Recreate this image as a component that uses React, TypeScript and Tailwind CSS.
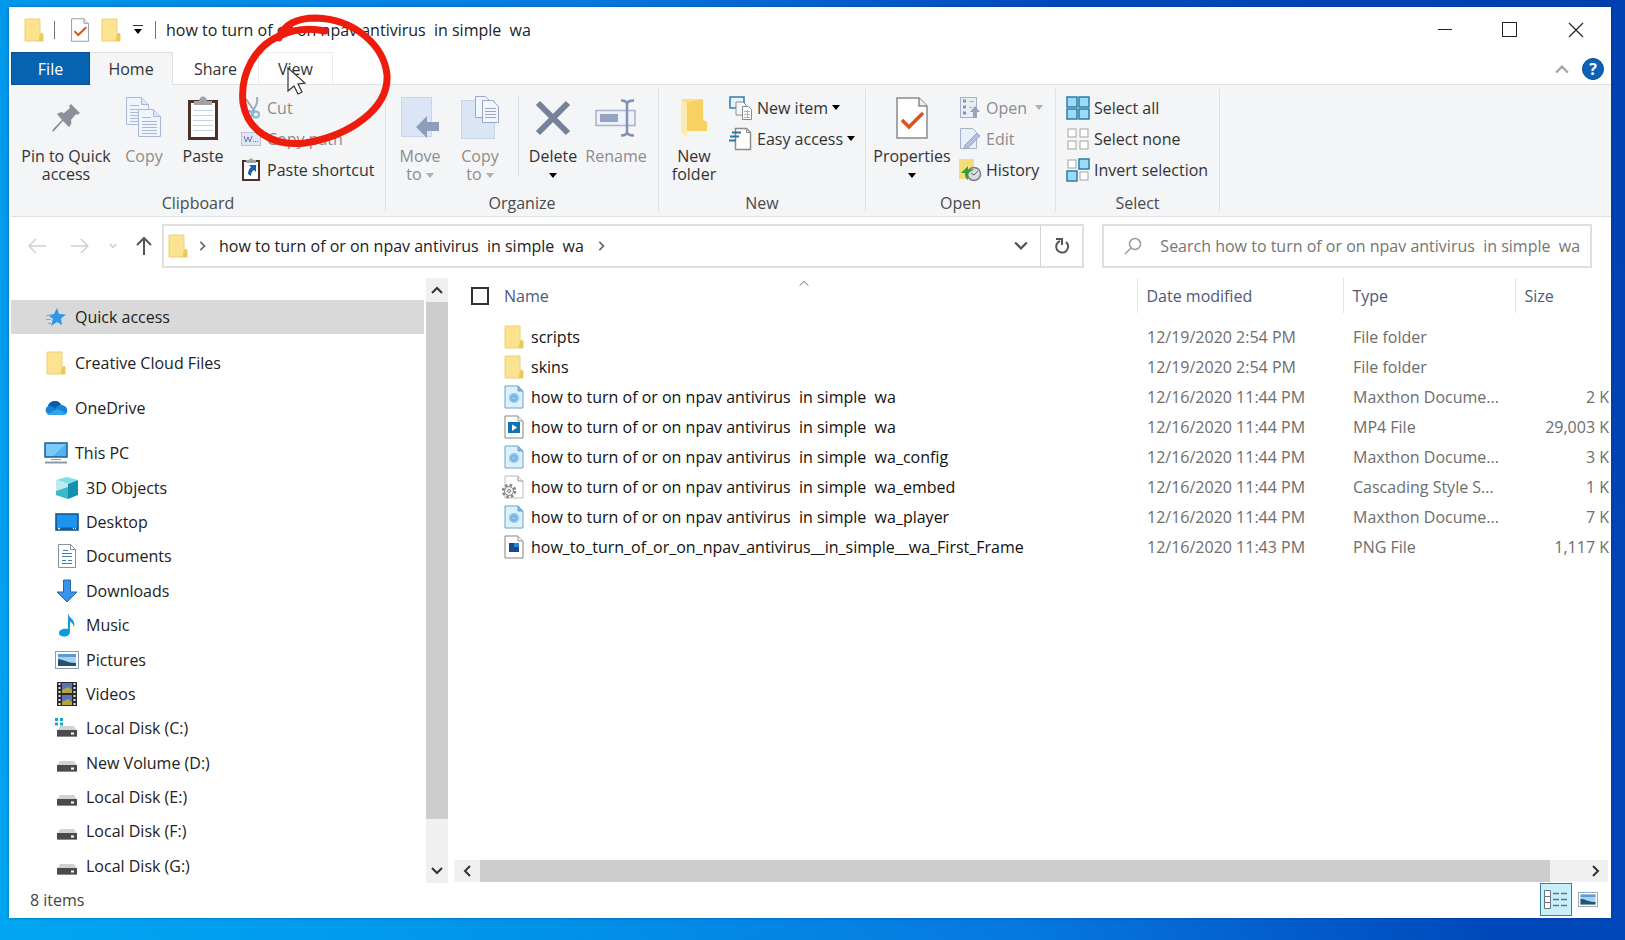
import React, { ReactNode } from "react";

type IconProps = { className?: string };

const FolderIcon = ({ className = "w-5 h-6" }: IconProps) => (
  <svg viewBox="0 0 20 24" className={className}>
    <path d="M1 1h15v14l3 1v7H1z" fill="#fbe38f" />
    <path d="M1 1h15v14l3 1v7H1z" fill="none" stroke="#ecd07a" />
    <path d="M14.5 23l1.500-7 3-1v8z" fill="#eec758" />
  </svg>
);

const CheckDocIcon = ({ className = "w-5 h-6" }: IconProps) => (
  <svg viewBox="0 0 32 42" className={className}>
    <path d="M1 1h22l8 8v32H1z" fill="#fff" stroke="#8a8a8a" strokeWidth="1.500" />
    <path d="M23 1v8h8" fill="#eee" stroke="#8a8a8a" strokeWidth="1.500" />
    <path d="M6 23l7 7 14-14" fill="none" stroke="#d9541e" strokeWidth="3.500" />
  </svg>
);

const PinIcon = () => (
  <svg viewBox="0 0 30 30" className="w-[30px] h-[30px]">
    <path d="M20 1l9 9-3 2-1-1-5 6c1 3 0 5-2 7l-6-6-9 10-2 1 1-3 9-9-5-6c3-2 5-2 7-1l6-5-1-2z" fill="#8b9199" />
  </svg>
);

const Page = ({ x, y }: { x: number; y: number }) => (
  <g transform={`translate(${x} ${y})`} stroke="#a9b8d4">
    <path d="M.5.5h15l7 7v20h-22z" fill="#f0f5fd" />
    <path d="M15.500.5v7h7" fill="#dbe5f5" />
    <path d="M4 8.500h9M4 12.500h15M4 15.500h15M4 18.500h15M4 21.500h15M4 24.500h15" />
  </g>
);

const CopyIcon = () => (
  <svg viewBox="0 0 36 42" className="w-9 h-[42px]">
    <Page x={0} y={0} />
    <Page x={12} y={12} />
  </svg>
);

const PasteIcon = () => (
  <svg viewBox="0 0 30 44" className="w-[30px] h-11">
    <rect x="1.500" y="5.500" width="27" height="37" fill="#fff" stroke="#4b3327" strokeWidth="3" />
    <path d="M5 14.500h20M5 19.500h20M5 24.500h20M5 29.500h20M5 34.500h20" stroke="#c3d3e2" />
    <path d="M6 9V5h5c0-6 8-6 8 0h5v4z" fill="#a0a4a8" />
  </svg>
);

const ScissorsIcon = () => (
  <svg viewBox="0 0 20 22" className="w-5 h-[22px]" fill="none">
    <path d="M16 0c1 6-1 9-5 15M5 2l9 13" stroke="#9aa9bd" strokeWidth="2" />
    <circle cx="8" cy="17" r="3" stroke="#8bb5d0" strokeWidth="2" />
    <circle cx="15" cy="17.500" r="3" stroke="#8bb5d0" strokeWidth="2" />
  </svg>
);

const CopyPathIcon = () => (
  <svg viewBox="0 0 20 14" className="w-5 h-[14px]">
    <rect x=".5" y=".5" width="19" height="13" fill="#dfe6f6" stroke="#b9c3dc" />
    <path d="M3 4l2 6 2-5 2 5 2-6" fill="none" stroke="#6b7da8" />
    <path d="M12 9.500h1M14 9.500h1M16 9.500h1" stroke="#6b7da8" />
  </svg>
);

const PasteShortcutIcon = () => (
  <svg viewBox="0 0 20 23" className="w-5 h-[23px]">
    <rect x="2" y="3" width="16" height="19" fill="#fff" stroke="#4b3327" strokeWidth="2" />
    <path d="M5 5V2h3c0-2 4-2 4 0h3v3z" fill="#a0a4a8" />
    <path d="M8 7h7v7l-2-2c-2 1-3 3-3 6l-3-2c0-3 1-5 3-7z" fill="#1c5fa8" />
  </svg>
);

const MoveToIcon = () => (
  <svg viewBox="0 0 38 42" className="w-[38px] h-[42px]">
    <rect x=".5" y=".5" width="30" height="39" fill="#dae5f6" stroke="#c8d5ea" />
    <path d="M15 30l11-11v6h12v9H26v7z" fill="#8d9dbb" />
  </svg>
);

const CopyToIcon = () => (
  <svg viewBox="0 0 38 44" className="w-[38px] h-11">
    <rect x=".5" y="4.500" width="33" height="38" fill="#dae5f6" stroke="#c8d5ea" />
    <g fill="#f3f6fd" stroke="#98a7c6">
      <path d="M14.500.5h10l5 5v16h-15z" />
      <path d="M21.500 4.500h10l6 6v16h-16z" />
      <path d="M24 12.500h11M24 15.500h11M24 18.500h11M24 21.500h11" />
    </g>
  </svg>
);

const DeleteIcon = () => (
  <svg viewBox="0 0 36 36" className="w-9 h-9">
    <path d="M3 3l30 30M33 3L3 33" stroke="#76819c" strokeWidth="6" />
  </svg>
);

const RenameIcon = () => (
  <svg viewBox="0 0 42 38" className="w-[42px] h-[38px]">
    <rect x="1" y="11.500" width="39" height="15" fill="#eef2fa" stroke="#a9b3c9" strokeWidth="1.500" />
    <rect x="5" y="15" width="18" height="8" fill="#97a4c0" />
    <path d="M26 1.500c4 0 6 1 6 4v27c0 3-2 4-6 4M39 1.500c-4 0-7 1-7 4v27c0 3 3 4 7 4" fill="none" stroke="#8492b0" strokeWidth="2.500" />
  </svg>
);

const NewFolderIcon = () => (
  <svg viewBox="0 0 26 38" className="w-[26px] h-[38px]">
    <path d="M0 0h22v22l4 1v9H6v6l-6-5z" fill="#fbdf83" />
    <path d="M6 4l16-4v21l4 2v9H6z" fill="#f7d163" />
    <path d="M0 0l6 5v33l-6-5z" fill="#fdeab0" />
  </svg>
);

const NewItemIcon = () => (
  <svg viewBox="0 0 24 24" className="w-6 h-6">
    <path d="M1 1h14v11H1z" fill="#e6f3fc" stroke="#3679a8" strokeWidth="1.500" />
    <path d="M7 6h7l3 3v10H7z" fill="#f5f8fb" stroke="#888" />
    <path d="M13.500 10.500h6l3 3v10h-9z" fill="#fff" stroke="#888" />
    <path d="M15 15.500h6M15 18.500h6M15 21.500h6M18.500 14v8" stroke="#b5b5b5" />
  </svg>
);

const EasyAccessIcon = () => (
  <svg viewBox="0 0 24 24" className="w-6 h-6">
    <path d="M6.500 1.500h11l4 4v17h-15z" fill="#fff" stroke="#8d8d8d" strokeWidth="1.500" />
    <path d="M17.500 1.500v4h4" fill="none" stroke="#8d8d8d" />
    <path d="M3 5.500h9M1 9.500h9M0 13.500h7" stroke="#35739f" strokeWidth="2" />
  </svg>
);

const OpenIcon = () => (
  <svg viewBox="0 0 20 22" className="w-5 h-[22px]">
    <rect x=".5" y=".5" width="16" height="20" fill="#e9edf6" stroke="#a6b0c6" />
    <path d="M3 4h3M3 10h3M3 16h3" stroke="#8694b2" strokeWidth="3" />
    <path d="M9 4.500h5M9 10.500h3" stroke="#a6b0c6" />
    <path d="M15 9l5 6h-3v6h-4v-6h-3z" fill="#98a4bc" />
  </svg>
);

const EditIcon = () => (
  <svg viewBox="0 0 20 22" className="w-5 h-[22px]">
    <path d="M.5.5h12l4 4v16H.5z" fill="#e9eef9" stroke="#a6b0c6" />
    <path d="M17 5l3 3L8 20l-4 1 1-4z" fill="#b3c0df" stroke="#98a7ca" />
  </svg>
);

const HistoryIcon = () => (
  <svg viewBox="0 0 24 24" className="w-6 h-6">
    <path d="M1 1h15v12l2 8H1z" fill="#f7dd78" />
    <circle cx="16" cy="16" r="6.500" fill="#d9dde0" stroke="#7b7f85" strokeWidth="1.500" />
    <path d="M16 17l4-4M16 17l-3-2" stroke="#666" />
    <path d="M3 15l7-7v4c3-1 5-1 6 0-5 1-7 4-6 10-2-1-3-3-3-7z" fill="#2e9f3a" />
  </svg>
);

const SelectIcon = ({ on }: { on: boolean[] }) => (
  <svg viewBox="0 0 24 24" className="w-6 h-6">
    {on.map((active, i) => {
      const x = (i % 2) * 12;
      const y = Math.floor(i / 2) * 12;
      return active ? (
        <rect key={i} x={x + 1} y={y + 1} width="10" height="10" fill="#9bdcf8" stroke="#2b7ba8" strokeWidth="1.500" />
      ) : (
        <rect key={i} x={x + 2} y={y + 2} width="8" height="8" fill="#fff" stroke="#a3a3a3" />
      );
    })}
  </svg>
);

const Chevron = ({ dir, className = "w-3 h-3 text-[#333]", width = 2 }: { dir: "up" | "down" | "left" | "right"; className?: string; width?: number }) => {
  const paths = {
    up: "M1 9l5-5 5 5",
    down: "M1 3l5 5 5-5",
    left: "M9 1L4 6l5 5",
    right: "M4 1l5 5-5 5"
  };
  return (
    <svg viewBox="0 0 12 12" className={className} fill="none" stroke="currentColor" strokeWidth={width}>
      <path d={paths[dir]} />
    </svg>
  );
};

const Caret = ({ className = "text-black" }: IconProps) => (
  <svg viewBox="0 0 8 5" className={`inline-block w-2 h-[5px] shrink-0 ${className}`}>
    <path d="M0 0h8L4 5z" fill="currentColor" />
  </svg>
);

const StarIcon = () => (
  <svg viewBox="0 0 20 20" className="w-5 h-5">
    <path d="M11 1l2 6 7 .5-5 4 1 6.500-5-3-6 4 2-7-5-4 6-1z" fill="#2f97e6" />
    <path d="M0 8.500h6M0 12.500h5M2 16.500h3" stroke="#5eb2f0" />
  </svg>
);

const OneDriveIcon = () => (
  <svg viewBox="0 0 24 16" className="w-6 h-4">
    <path d="M5 15a5 5 0 0 1-1-9c2-6 11-7 13-1 4 0 7 3 6 7 0 2-2 3-4 3z" fill="#1583d8" />
    <path d="M4 6c2-6 11-7 13-1-3 0-5 2-6 4C9 6 7 5 4 6z" fill="#0c59a8" />
    <path d="M3 14l11-5 8 4c-1 2-2 2-3 2H5z" fill="#2ea4ee" />
  </svg>
);

const ComputerIcon = () => (
  <svg viewBox="0 0 24 22" className="w-6 h-[22px]">
    <rect x="1" y="1" width="22" height="14" fill="#4cb4f2" stroke="#1f5f8f" strokeWidth="1.500" />
    <path d="M2 2h20L9 14H2z" fill="#79cbf8" />
    <path d="M7 17.500h10" stroke="#8fa0ad" />
    <path d="M1 20.500h22" stroke="#8d9ba6" strokeWidth="2" />
  </svg>
);

const CubeIcon = () => (
  <svg viewBox="0 0 24 22" className="w-6 h-[22px]">
    <path d="M1 3l11-3 11 3-10 4z" fill="#7fe0ea" />
    <path d="M1 3l12 4v15L1 18z" fill="#bfe9ef" />
    <path d="M1 14l12-4v12L1 18z" fill="#3ab9c6" />
    <path d="M23 3L13 7v15l10-4z" fill="#148fb1" />
  </svg>
);

const DesktopIcon = () => (
  <svg viewBox="0 0 24 18" className="w-6 h-[18px]">
    <rect x="1" y="1" width="22" height="16" fill="#1c94f0" stroke="#104f83" strokeWidth="1.500" />
    <path d="M2 15.500h20" stroke="#0b5ea5" strokeWidth="2" />
    <path d="M3 15.500h2M18 15.500h1M20 15.500h1" stroke="#fff" strokeWidth="1.500" />
  </svg>
);

const DocumentIcon = () => (
  <svg viewBox="0 0 18 24" className="w-[18px] h-6">
    <path d="M.5.5h12l5 5v18H.5z" fill="#fff" stroke="#8a8f94" />
    <path d="M12.500.5v5h5" fill="none" stroke="#8a8f94" />
    <path d="M5 6.500h5M4 9.500h10M4 12.500h10M4 16.500h4M4 19.500h10M10 16.500h4" stroke="#3a82ad" />
  </svg>
);

const DownloadIcon = () => (
  <svg viewBox="0 0 22 24" className="w-[22px] h-6">
    <path d="M7.500 1h7v12H21L11 23 1 13h6.500z" fill="#3a94ea" stroke="#2467ad" />
  </svg>
);

const MusicIcon = () => (
  <svg viewBox="0 0 18 24" className="w-[18px] h-6">
    <path d="M10 0c1 6 8 6 6 14-1-4-3-5-4-5v10c0 6-11 6-11 1 0-3 4-5 9-4z" fill="#109bdc" />
  </svg>
);

const PictureIcon = ({ className = "w-6 h-[18px]" }: IconProps) => (
  <svg viewBox="0 0 24 18" className={className}>
    <rect x=".5" y=".5" width="23" height="17" fill="#fff" stroke="#8c99aa" />
    <rect x="3" y="3" width="18" height="12" fill="#a5d3f3" />
    <path d="M3 3h18v3H3z" fill="#5f9bd0" />
    <path d="M3 8c5 0 9 4 18 4v3H3z" fill="#275371" />
  </svg>
);

const VideoIcon = () => (
  <svg viewBox="0 0 20 24" className="w-5 h-6">
    <path d="M0 0h20v24H0z" fill="#2b2b2e" />
    <path d="M5 1h10v10H5zM5 13h10v10H5z" fill="#5a74b8" />
    <path d="M5 8l6-3 4 3v3H5zM5 20l6-3 4 3v3H5z" fill="#b4a53f" />
    <path d="M2.500 1v23M17.500 1v23" stroke="#e5e5e5" strokeWidth="2" strokeDasharray="2 2" />
  </svg>
);

const DiskIcon = ({ system }: { system?: boolean }) => (
  <svg viewBox="0 0 24 22" className="w-6 h-[22px]">
    <path d="M5 9h14l3 5H2z" fill="#d2d2d2" />
    <rect x="2" y="13" width="20" height="7" fill="#4a4a4a" />
    <path d="M2 19.500h20" stroke="#8a8a8a" />
    <path d="M16 16.500h3" stroke="#fff" strokeWidth="2" />
    {system && <path d="M0 2.500h3M5 2.500h3M0 7h3M5 7h3" stroke="#19a5cf" strokeWidth="3" />}
  </svg>
);

const FileIcon = ({ kind }: { kind: string }) => {
  if (kind === "folder") return <FolderIcon />;
  const web = kind === "web";
  return (
    <svg viewBox="0 0 20 24" className="w-5 h-6 overflow-visible">
      <path d="M1 1h13l5 5v17H1z" fill={web ? "#dcf0fc" : "#fff"} stroke={web ? "#6ba3cc" : kind === "css" ? "#bbb" : "#838383"} />
      <path d="M14 1v5h5" fill={web ? "#7db4dc" : "#eee"} stroke={web ? "#6ba3cc" : "#999"} />
      {web && <circle cx="10" cy="13" r="5" fill="#8cc4ee" />}
      {web && <circle cx="10" cy="13" r="2.500" fill="none" stroke="#6aaade" />}
      {kind === "video" && <path d="M4 7h12v11H4z" fill="#1173b4" />}
      {kind === "video" && <path d="M8 9.500l5 3-5 3.500z" fill="#fff" />}
      {kind === "image" && <path d="M5 8h10v9H5z" fill="#174b8e" />}
      {kind === "image" && <path d="M10 8h5v4h-5z" fill="#2f87d0" />}
      {kind === "css" && (
        <g fill="none" stroke="#858585">
          <circle cx="5" cy="16" r="6" strokeWidth="2.500" strokeDasharray="2.500 2.200" />
          <circle cx="5" cy="16" r="4.500" fill="#eee" />
          <circle cx="5" cy="16" r="1.500" />
        </g>
      )}
    </svg>
  );
};

const folderName = "how to turn of or on npav antivirus  in simple  wa";

const places: { name: string; icon: ReactNode; child?: boolean }[] = [
  { name: "Quick access", icon: <StarIcon /> },
  { name: "Creative Cloud Files", icon: <FolderIcon /> },
  { name: "OneDrive", icon: <OneDriveIcon /> },
  { name: "This PC", icon: <ComputerIcon /> },
  { name: "3D Objects", icon: <CubeIcon />, child: true },
  { name: "Desktop", icon: <DesktopIcon />, child: true },
  { name: "Documents", icon: <DocumentIcon />, child: true },
  { name: "Downloads", icon: <DownloadIcon />, child: true },
  { name: "Music", icon: <MusicIcon />, child: true },
  { name: "Pictures", icon: <PictureIcon />, child: true },
  { name: "Videos", icon: <VideoIcon />, child: true },
  { name: "Local Disk (C:)", icon: <DiskIcon system />, child: true },
  { name: "New Volume (D:)", icon: <DiskIcon />, child: true },
  { name: "Local Disk (E:)", icon: <DiskIcon />, child: true },
  { name: "Local Disk (F:)", icon: <DiskIcon />, child: true },
  { name: "Local Disk (G:)", icon: <DiskIcon />, child: true }
];

const files = [
  { name: "scripts", date: "12/19/2020 2:54 PM", type: "File folder", size: "", kind: "folder" },
  { name: "skins", date: "12/19/2020 2:54 PM", type: "File folder", size: "", kind: "folder" },
  { name: folderName, date: "12/16/2020 11:44 PM", type: "Maxthon Docume...", size: "2 K", kind: "web" },
  { name: folderName, date: "12/16/2020 11:44 PM", type: "MP4 File", size: "29,003 K", kind: "video" },
  { name: `${folderName}_config`, date: "12/16/2020 11:44 PM", type: "Maxthon Docume...", size: "3 K", kind: "web" },
  { name: `${folderName}_embed`, date: "12/16/2020 11:44 PM", type: "Cascading Style S...", size: "1 K", kind: "css" },
  { name: `${folderName}_player`, date: "12/16/2020 11:44 PM", type: "Maxthon Docume...", size: "7 K", kind: "web" },
  { name: "how_to_turn_of_or_on_npav_antivirus__in_simple__wa_First_Frame", date: "12/16/2020 11:43 PM", type: "PNG File", size: "1,117 K", kind: "image" }
];

const BigButton = ({ icon, className, children }: { icon: ReactNode; className: string; children: ReactNode }) => (
  <button className={`flex flex-col items-center shrink-0 pt-[11px] leading-[18px] whitespace-normal ${className}`}>
    <span className="flex items-center justify-center h-11 mb-[7px]">{icon}</span>
    <span>{children}</span>
  </button>
);

const SmallButton = ({ icon, disabled, children }: { icon: ReactNode; disabled?: boolean; children: ReactNode }) => (
  <button className={`flex items-center gap-1 h-[31px] ${disabled ? "text-[#8c8c8c]" : ""}`}>
    <span className="flex items-center justify-center w-6">{icon}</span>
    {children}
  </button>
);

const Group = ({ title, className, children }: { title: string; className: string; children: ReactNode }) => (
  <section className={`flex flex-col shrink-0 my-1 border-r border-[#e0e1e3] ${className}`}>
    <div className="flex h-[105px] -mt-1 mb-1">{children}</div>
    <h2 className="text-center leading-[18px] text-[#4a4a4a]">{title}</h2>
  </section>
);

const Ribbon = () => (
  <div className="flex h-[133px] shrink-0 bg-[#f4f5f7] border-y border-[#dfe0e2] whitespace-nowrap">
    <Group title="Clipboard" className="w-[375px]">
      <BigButton icon={<PinIcon />} className="w-[110px] px-1">Pin to Quick access</BigButton>
      <BigButton icon={<CopyIcon />} className="w-[46px] text-[#8c8c8c]">Copy</BigButton>
      <BigButton icon={<PasteIcon />} className="w-[72px]">Paste</BigButton>
      <div className="pt-[7px]">
        <SmallButton icon={<ScissorsIcon />} disabled>Cut</SmallButton>
        <SmallButton icon={<CopyPathIcon />} disabled>Copy path</SmallButton>
        <SmallButton icon={<PasteShortcutIcon />}>Paste shortcut</SmallButton>
      </div>
    </Group>
    <Group title="Organize" className="w-[273px]">
      <BigButton icon={<MoveToIcon />} className="w-14 ml-[6px] text-[#8c8c8c]">
        Move to&nbsp;<Caret className="text-[#b0b0b0]" />
      </BigButton>
      <BigButton icon={<CopyToIcon />} className="w-14 ml-1 text-[#8c8c8c]">
        Copy to&nbsp;<Caret className="text-[#b0b0b0]" />
      </BigButton>
      <div className="w-px h-20 mt-3 ml-[10px] mr-1 bg-[#dcdde0]" />
      <BigButton icon={<DeleteIcon />} className="w-[60px]">
        Delete <Caret />
      </BigButton>
      <BigButton icon={<RenameIcon />} className="w-[66px] text-[#8c8c8c]">Rename</BigButton>
    </Group>
    <Group title="New" className="w-[207px]">
      <BigButton icon={<NewFolderIcon />} className="w-[66px] ml-[2px]">New folder</BigButton>
      <div className="pt-[7px] ml-[2px]">
        <SmallButton icon={<NewItemIcon />}>New item <Caret /></SmallButton>
        <SmallButton icon={<EasyAccessIcon />}>Easy access <Caret /></SmallButton>
      </div>
    </Group>
    <Group title="Open" className="w-[190px]">
      <BigButton icon={<CheckDocIcon className="w-8 h-[42px]" />} className="w-[84px] ml-1">
        Properties <Caret />
      </BigButton>
      <div className="pt-[7px] ml-1">
        <SmallButton icon={<OpenIcon />} disabled>Open <Caret className="ml-1 text-[#b0b0b0]" /></SmallButton>
        <SmallButton icon={<EditIcon />} disabled>Edit</SmallButton>
        <SmallButton icon={<HistoryIcon />}>History</SmallButton>
      </div>
    </Group>
    <Group title="Select" className="w-[164px]">
      <div className="pt-[7px] ml-[10px]">
        <SmallButton icon={<SelectIcon on={[true, true, true, true]} />}>Select all</SmallButton>
        <SmallButton icon={<SelectIcon on={[false, false, false, false]} />}>Select none</SmallButton>
        <SmallButton icon={<SelectIcon on={[false, true, true, false]} />}>Invert selection</SmallButton>
      </div>
    </Group>
  </div>
);

const TitleBar = () => (
  <header className="flex items-center h-[45px] shrink-0 pl-[13px] text-[#444]">
    <FolderIcon />
    <span className="w-px h-[18px] ml-[10px] mr-4 bg-[#777]" />
    <CheckDocIcon className="w-[18px] h-6" />
    <FolderIcon className="w-5 h-6 ml-3" />
    <button aria-label="Customize toolbar" className="flex flex-col items-center gap-[3px] w-[34px]">
      <span className="w-[10px] h-px bg-[#333]" />
      <Caret />
    </button>
    <span className="w-px h-[18px] mr-[10px] bg-[#777]" />
    <h1 className="flex-1 whitespace-pre text-[#222]">{folderName}</h1>
    <button aria-label="Minimize" className="flex justify-center w-16">
      <span className="w-[14px] h-px bg-[#222]" />
    </button>
    <button aria-label="Maximize" className="flex justify-center w-16">
      <span className="w-[15px] h-[15px] border border-[#222]" />
    </button>
    <button aria-label="Close" className="flex justify-center w-[70px]">
      <svg viewBox="0 0 16 16" className="w-4 h-4" stroke="#222" strokeWidth="1.200">
        <path d="M1 1l14 14M15 1L1 15" />
      </svg>
    </button>
  </header>
);

const Tabs = () => (
  <nav className="flex items-stretch h-[33px] -mb-px shrink-0 z-10 text-[#333]">
    <button className="w-[79px] bg-[#0563b1] border border-[#0a4f92] text-white">File</button>
    <button className="w-[83px] bg-[#f4f5f7] border-t border-r border-[#dfe0e2]">Home</button>
    <button className="w-[85px]">Share</button>
    <button className="w-[75px] mb-px border-t border-x border-[#ececec]">View</button>
    <button aria-label="Collapse ribbon" className="ml-auto mr-[13px]">
      <Chevron dir="up" className="w-[14px] h-[14px] text-[#a5a5a5]" />
    </button>
    <button aria-label="Help" className="self-center flex items-center justify-center w-[22px] h-[22px] mr-[7px] rounded-full bg-[#0a63b8] border border-[#094a8c] text-white font-bold">
      ?
    </button>
  </nav>
);

const Arrow = ({ className }: { className: string }) => (
  <svg viewBox="0 0 18 16" className={`w-[18px] h-4 ${className}`} fill="none" stroke="currentColor" strokeWidth="1.500">
    <path d="M18 8H1M8 1L1 8l7 7" />
  </svg>
);

const AddressBar = () => (
  <div className="flex items-center shrink-0 h-[61px] pb-[4px] pr-[19px] text-[#444]">
    <div className="flex items-center w-[151px] shrink-0 pl-[17px]">
      <button aria-label="Back"><Arrow className="text-[#cfcfcf]" /></button>
      <button aria-label="Forward" className="ml-[25px]"><Arrow className="rotate-180 text-[#cfcfcf]" /></button>
      <button aria-label="Recent" className="ml-5"><Chevron dir="down" className="w-2 h-2 text-[#c8c8c8]" /></button>
      <button aria-label="Up" className="ml-[18px]"><Arrow className="rotate-90 text-[#555] stroke-2" /></button>
    </div>
    <div className="flex flex-[71] h-11 border-2 border-[#e0e0e0]">
      <div className="flex flex-1 items-center pl-1 pr-3">
        <FolderIcon className="w-5 h-6" />
        <Chevron dir="right" className="w-[10px] h-[10px] ml-[9px] text-[#666]" />
        <a href="#folder" className="ml-[12px] whitespace-pre text-[#222]">{folderName}</a>
        <Chevron dir="right" className="w-[10px] h-[10px] ml-3 text-[#666]" />
        <button aria-label="Previous locations" className="ml-auto">
          <Chevron dir="down" className="w-[14px] h-[14px] text-[#555]" />
        </button>
      </div>
      <button aria-label="Refresh" className="flex items-center justify-center w-[42px] border-l border-[#d5d5d5]">
        <svg viewBox="0 0 16 18" className="w-4 h-[18px]" fill="none" stroke="#555" strokeWidth="2">
          <path d="M12 5a6 6 0 1 1-6-1M2 2h6v6" />
        </svg>
      </button>
    </div>
    <label className="flex flex-[36] items-center h-11 ml-[18px] pl-5 border-2 border-[#e0e0e0]">
      <svg viewBox="0 0 18 18" className="w-[18px] h-[18px] shrink-0" fill="none" stroke="#999" strokeWidth="1.500">
        <circle cx="11" cy="7" r="5.500" />
        <path d="M7 11l-6 6" />
      </svg>
      <input
        type="text"
        aria-label="Search"
        placeholder={`Search ${folderName}`}
        className="flex-1 min-w-0 ml-[18px] outline-0 placeholder:text-[#757575]"
      />
    </label>
  </div>
);

const Sidebar = () => (
  <aside className="flex w-[437px] shrink-0 mr-[6px]">
    <ul className="flex flex-col flex-1 pt-[22px] mr-[2px]">
      {places.map(({ name, icon, child }, i) => (
        <li key={name} className={`flex flex-1 min-h-0 ${i < 3 ? "mb-[11px]" : ""} ${i === 0 ? "bg-[#d9d9d9]" : ""}`}>
          <a href="#place" className={`flex flex-1 items-center gap-[7px] text-[#222] ${child ? "pl-11" : "pl-[33px]"}`}>
            <span className="flex items-center justify-center w-6">{icon}</span>
            {name}
          </a>
        </li>
      ))}
    </ul>
    <div className="flex flex-col w-[22px] bg-[#f0f0f0]">
      <button aria-label="Scroll up" className="flex items-center justify-center h-6">
        <Chevron dir="up" />
      </button>
      <div className="flex-[518] bg-[#cdcdcd]" />
      <div className="flex-[40]" />
      <button aria-label="Scroll down" className="flex items-center justify-center h-6">
        <Chevron dir="down" />
      </button>
    </div>
  </aside>
);

const FileTable = () => (
  <table className="w-full table-fixed whitespace-pre text-[#6d6d6d]">
    <colgroup>
      <col className="w-[50px]" />
      <col />
      <col className="w-[206px]" />
      <col className="w-[172px]" />
      <col className="w-24" />
    </colgroup>
    <thead>
      <tr className="h-[35px] text-left text-[#4c5a78]">
        <th className="pl-[17px]">
          <input type="checkbox" aria-label="Select all items" className="block appearance-none w-[18px] h-[18px] border-2 border-[#333]" />
        </th>
        <th className="relative font-normal">
          Name
          <Chevron dir="up" width={1} className="absolute left-1/2 top-0 -ml-[22px] w-3 h-[10px] text-[#444]" />
        </th>
        <th className="pl-[9px] border-l border-[#e4e4e4] font-normal">Date modified</th>
        <th className="pl-[9px] border-l border-[#e4e4e4] font-normal">Type</th>
        <th className="pl-[9px] border-l border-[#e4e4e4] font-normal">Size</th>
      </tr>
      <tr className="h-[9px]" />
    </thead>
    <tbody>
      {files.map(({ name, date, type, size, kind }) => (
        <tr key={name + type} className="h-[30px]">
          <td />
          <td className="text-[#111]">
            <span className="flex items-center gap-[7px]">
              <FileIcon kind={kind} />
              {name}
            </span>
          </td>
          <td className="pl-[10px]">{date}</td>
          <td className="pl-[10px]">{type}</td>
          <td className="pr-[2px] text-right">{size}</td>
        </tr>
      ))}
    </tbody>
  </table>
);

const StatusBar = () => (
  <footer className="flex items-center h-[35px] shrink-0 pl-[19px] pr-[13px] pb-[2px] text-[#444]">
    <span className="flex-1">8 items</span>
    <button aria-label="Details view" className="flex items-center justify-center w-8 h-[33px] mr-[6px] border border-[#3a7f9c] bg-[#c9effc]">
      <svg viewBox="0 0 24 20" className="w-6 h-5" fill="none" stroke="#68747d">
        <path d="M.5.5h6v6h-6zM.5 6.500h6v6h-6zM.5 12.500h6v6h-6z" fill="#fff" />
        <path d="M9 3.500h6M17 3.500h6M9 9.500h6M17 9.500h6M9 15.500h6M17 15.500h6" strokeWidth="1.500" />
      </svg>
    </button>
    <button aria-label="Thumbnail view">
      <PictureIcon className="w-5 h-[15px]" />
    </button>
  </footer>
);

// Hand-drawn ring and pointer lying over the View tab
const Annotation = () => (
  <svg viewBox="0 0 400 160" className="absolute left-0 top-0 z-20 w-[400px] h-40 pointer-events-none">
    <path d="M288 68v23l6-5 4 8 4-2-4-8 7-1z" fill="#fff" stroke="#333" strokeWidth="1.200" />
    <path
      d="M279 38C284 24 298 18 316 18c38 1 68 27 71 57 2 34-38 61-82 68-34 4-58-14-62-40-3-30 12-56 36-67 15-7 32-8 46-5"
      fill="none"
      stroke="#ee1c0c"
      strokeWidth="7"
      strokeLinecap="round"
      strokeLinejoin="round"
    />
  </svg>
);

const App = () => (
  <main className="relative flex h-screen pt-[7px] pr-[14px] pb-[22px] pl-[9px] bg-[linear-gradient(65deg,#00a6f2,#0098ec_21%,#0678e0_50%,#0049bd_72%,#0040b0)] font-['Open_Sans','Noto_Sans',sans-serif] text-[16px] leading-5 text-[#333]">
    <div className="flex flex-col flex-1 min-w-0 pl-[2px] bg-white shadow-[0_0_3px_#00306080]">
      <TitleBar />
      <Tabs />
      <Ribbon />
      <AddressBar />
      <div className="flex flex-1 min-h-0">
        <Sidebar />
        <div className="flex flex-col flex-1 min-w-0">
          <div className="flex-1">
            <FileTable />
          </div>
          <div className="flex h-[22px] mb-px mr-[3px] bg-[#f0f0f0]">
            <button aria-label="Scroll left" className="flex items-center justify-center w-[26px]">
              <Chevron dir="left" />
            </button>
            <div className="flex-[1072] bg-[#cdcdcd]" />
            <div className="flex-[32]" />
            <button aria-label="Scroll right" className="flex items-center justify-center w-[26px]">
              <Chevron dir="right" />
            </button>
          </div>
        </div>
      </div>
      <StatusBar />
    </div>
    <Annotation />
  </main>
);

export default App;
